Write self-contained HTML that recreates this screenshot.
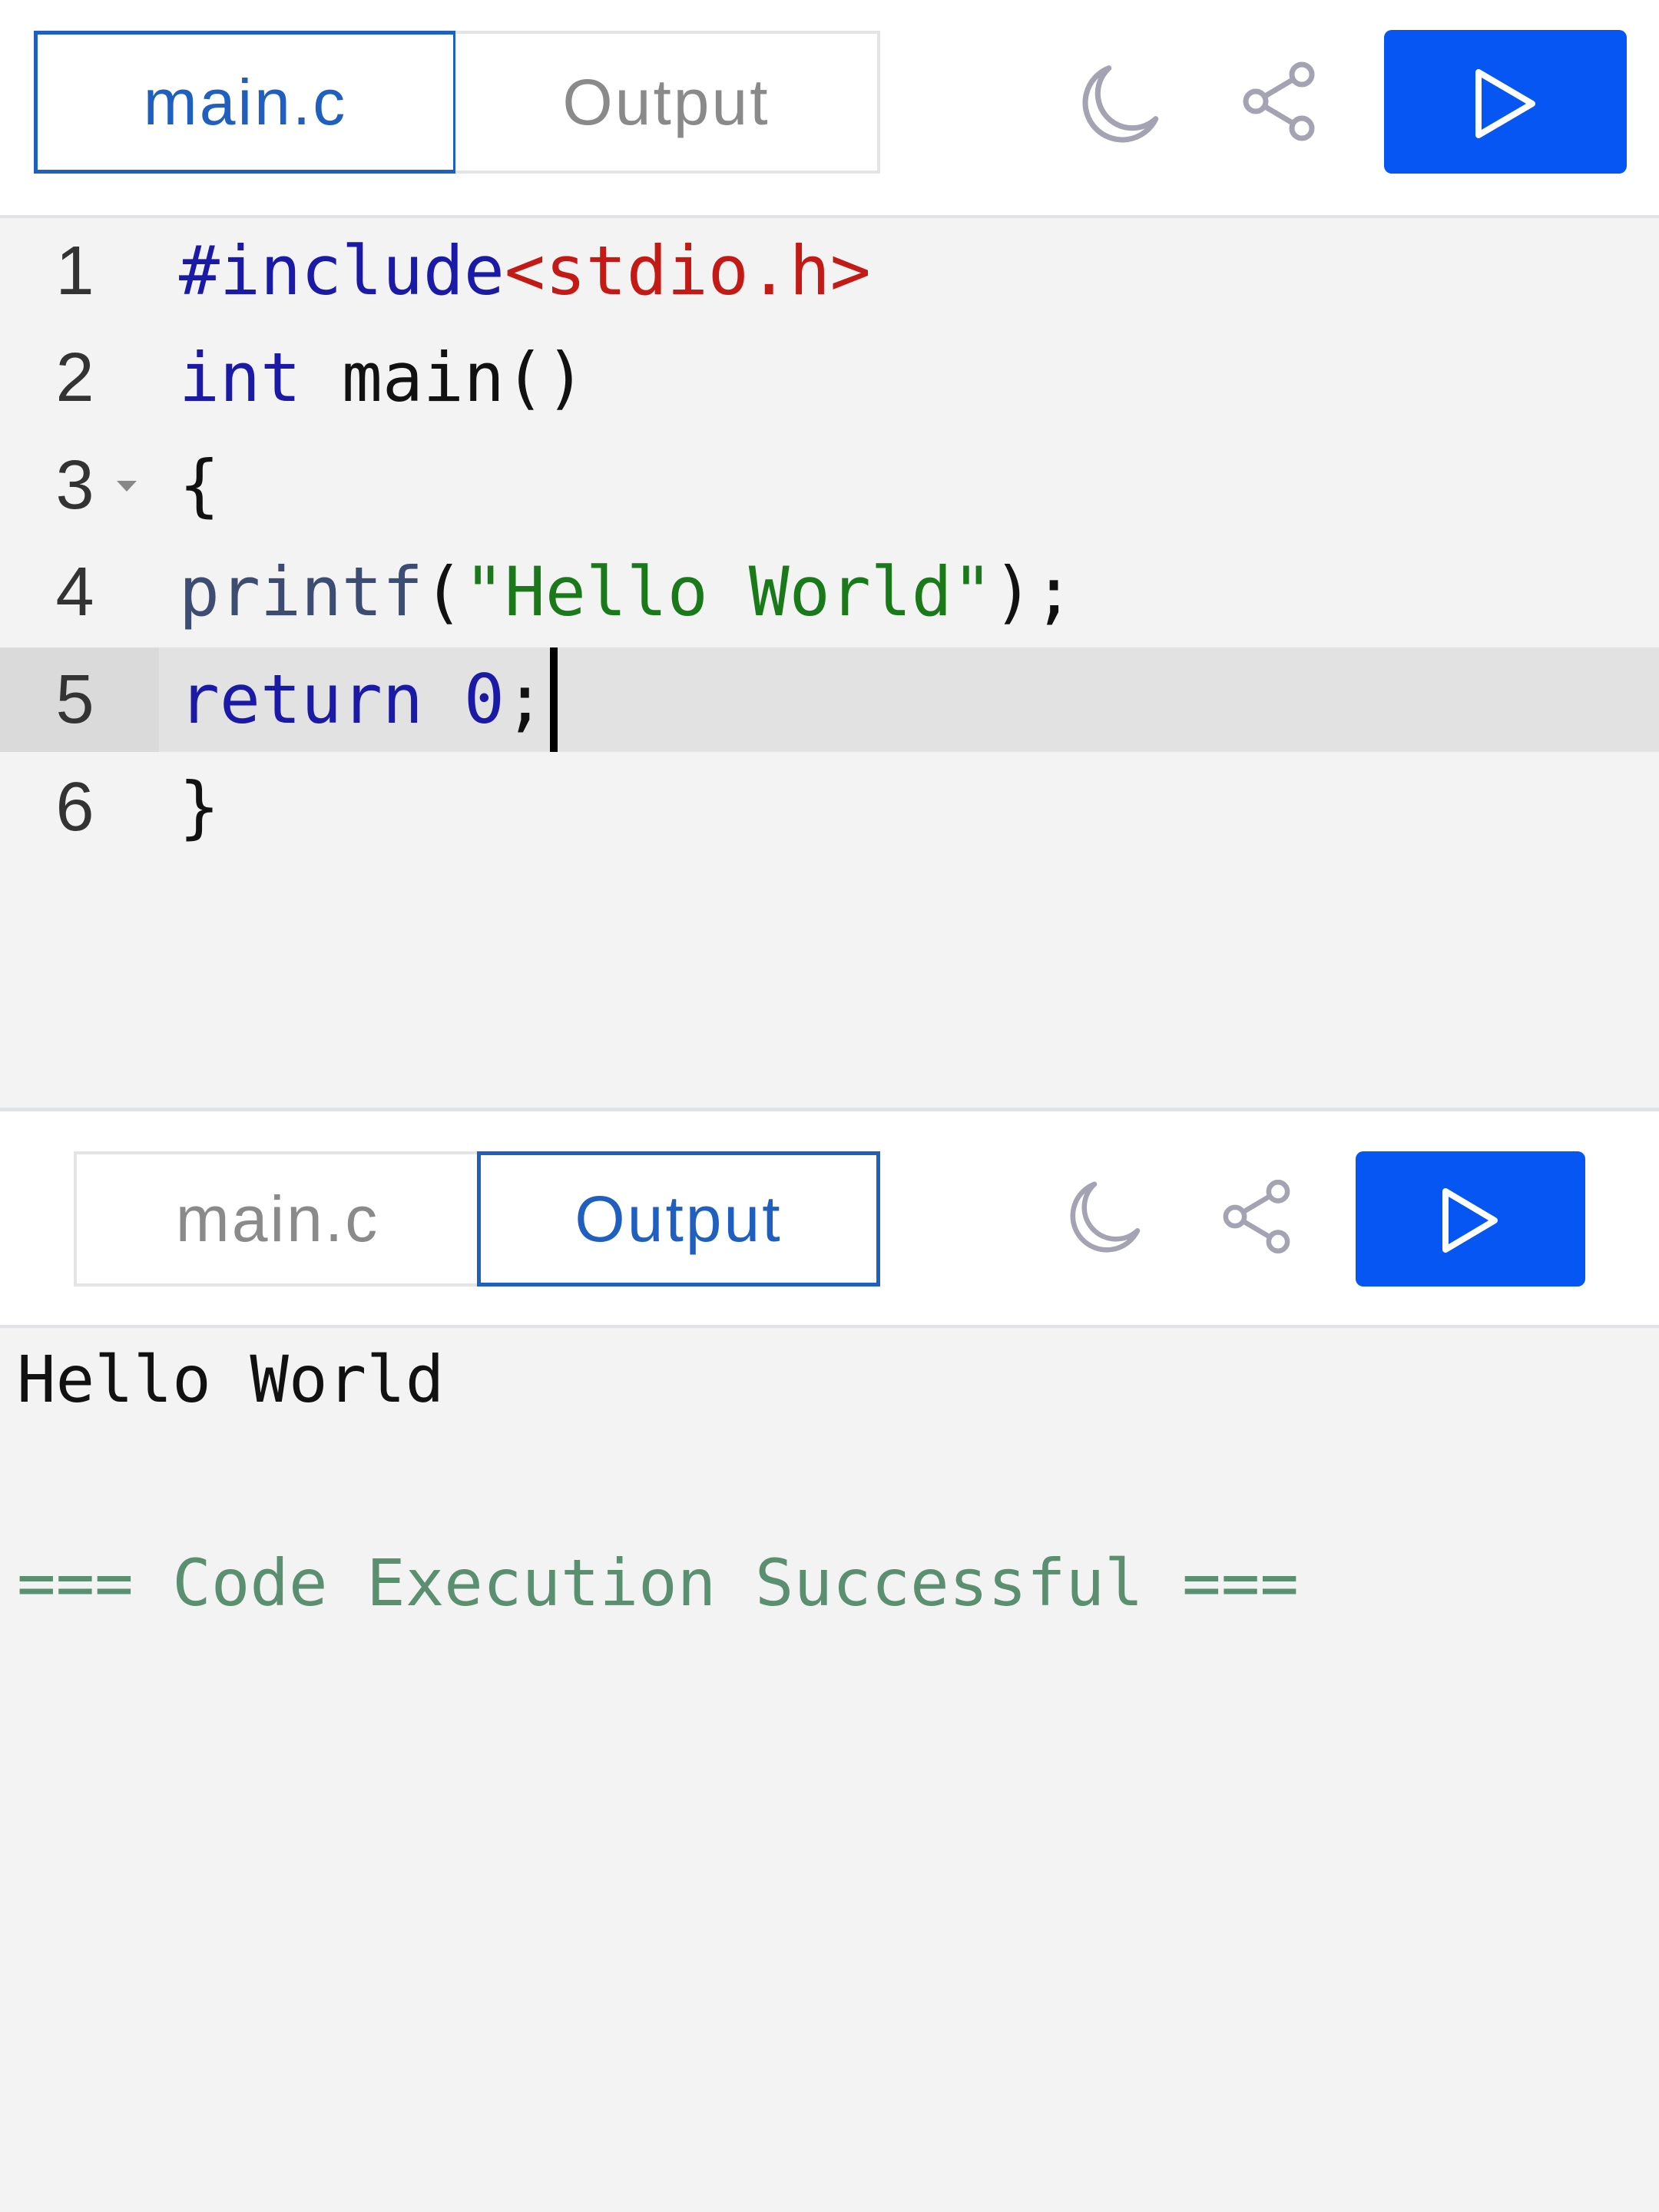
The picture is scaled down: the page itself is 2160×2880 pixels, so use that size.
<!DOCTYPE html>
<html><head><meta charset="utf-8"><style>
*{margin:0;padding:0;box-sizing:border-box}
body{width:2160px;height:2880px;position:relative;background:#f3f3f3;overflow:hidden;font-family:"Liberation Sans",sans-serif}
.abs{position:absolute}
.hdr{background:#fff;left:0;width:2160px}
.tab{position:absolute;display:flex;align-items:center;justify-content:center;font-size:84px;letter-spacing:3px;color:#8a8a8a;border:4px solid #e4e4e4;background:#fff}
.tab.act{border:5px solid #1f5fbf;color:#1f5fbf}
.run{position:absolute;background:#0556f3;border-radius:10px}
.code{font-family:"DejaVu Sans Mono","Liberation Mono",monospace;font-size:88px;position:absolute;left:233px;line-height:140px;white-space:pre;color:#111}
.ln{position:absolute;left:50px;width:95px;text-align:center;font-size:90px;color:#333;line-height:140px}
.kw{color:#1a1aa6}.inc{color:#c41a16}.str{color:#1a7a1a}.fn{color:#3c4c72}
</style></head><body>
<div class="abs hdr" style="top:0;height:280px"></div>
<div class="abs" style="top:280px;left:0;width:2160px;height:4px;background:#dfe3e8"></div>
<div class="tab act" style="left:44px;top:40px;width:551px;height:186px">main.c</div>
<div class="tab" style="left:593px;top:40px;width:553px;height:186px;border-left:none">Output</div>
<svg class="abs" style="left:1398px;top:76px" width="122" height="122" viewBox="0 0 24 24" fill="none" stroke="#a3a3b3" stroke-width="1.4" stroke-linejoin="round"><path d="M9 2.5A9.5 9.5 0 1 0 21 15.5A7.5 7.5 0 0 1 9 2.5Z"/></svg>
<svg class="abs" style="left:1605px;top:72px" width="120" height="120" viewBox="0 0 24 24" fill="none" stroke="#a3a3b3" stroke-width="1.4"><circle cx="18" cy="5" r="2.6"/><circle cx="6" cy="12" r="2.6"/><circle cx="18" cy="19" r="2.6"/><path d="M8.3 10.7L15.7 6.3M8.3 13.3L15.7 17.7"/></svg>
<div class="run" style="left:1802px;top:39px;width:316px;height:187px"></div>
<svg class="abs" style="left:1915px;top:88px" width="90" height="95" viewBox="0 0 90 95" fill="none" stroke="#fff" stroke-width="8" stroke-linejoin="round"><path d="M10 6L80 47L10 88Z"/></svg>

<div class="abs" style="left:0;top:843px;width:2160px;height:136px;background:#e2e2e2"></div>
<div class="abs" style="left:0;top:843px;width:207px;height:136px;background:#dadada"></div>
<div class="ln" style="top:283px">1</div>
<div class="ln" style="top:422px">2</div>
<div class="ln" style="top:562px">3</div>
<div class="ln" style="top:701px">4</div>
<div class="ln" style="top:841px">5</div>
<div class="ln" style="top:981px">6</div>
<svg class="abs" style="left:150px;top:624px" width="30" height="18"><path d="M2 2L28 2L15 16Z" fill="#888"/></svg>
<div class="code" style="top:283px"><span class="kw">#include</span><span class="inc">&lt;stdio.h&gt;</span></div>
<div class="code" style="top:422px"><span class="kw">int</span> main()</div>
<div class="code" style="top:562px">{</div>
<div class="code" style="top:701px"><span class="fn">printf</span>(<span class="str">"Hello World"</span>);</div>
<div class="code" style="top:841px"><span class="kw">return</span> <span class="kw">0</span>;</div>
<div class="code" style="top:981px">}</div>
<div class="abs" style="left:716px;top:843px;width:10px;height:136px;background:#000"></div>

<div class="abs" style="top:1442px;left:0;width:2160px;height:5px;background:#dfe3e8"></div>
<div class="abs hdr" style="top:1447px;height:278px"></div>
<div class="abs" style="top:1725px;left:0;width:2160px;height:4px;background:#dfe3e8"></div>
<div class="tab" style="left:96px;top:1499px;width:527px;height:176px;border-right:none">main.c</div>
<div class="tab act" style="left:621px;top:1499px;width:525px;height:176px">Output</div>
<svg class="abs" style="left:1383px;top:1530px" width="112" height="112" viewBox="0 0 24 24" fill="none" stroke="#a3a3b3" stroke-width="1.4" stroke-linejoin="round"><path d="M9 2.5A9.5 9.5 0 1 0 21 15.5A7.5 7.5 0 0 1 9 2.5Z"/></svg>
<svg class="abs" style="left:1580px;top:1528px" width="112" height="112" viewBox="0 0 24 24" fill="none" stroke="#a3a3b3" stroke-width="1.4"><circle cx="18" cy="5" r="2.6"/><circle cx="6" cy="12" r="2.6"/><circle cx="18" cy="19" r="2.6"/><path d="M8.3 10.7L15.7 6.3M8.3 13.3L15.7 17.7"/></svg>
<div class="run" style="left:1765px;top:1499px;width:299px;height:176px"></div>
<svg class="abs" style="left:1872px;top:1545px" width="84" height="88" viewBox="0 0 84 88" fill="none" stroke="#fff" stroke-width="8" stroke-linejoin="round"><path d="M10 6L74 44L10 82Z"/></svg>

<div class="code" style="left:22px;top:1726px;font-size:84px;color:#111">Hello World</div>
<div class="code" style="left:22px;top:1991px;font-size:84px;color:#5a8f6f">=== Code Execution Successful ===</div>
</body></html>
